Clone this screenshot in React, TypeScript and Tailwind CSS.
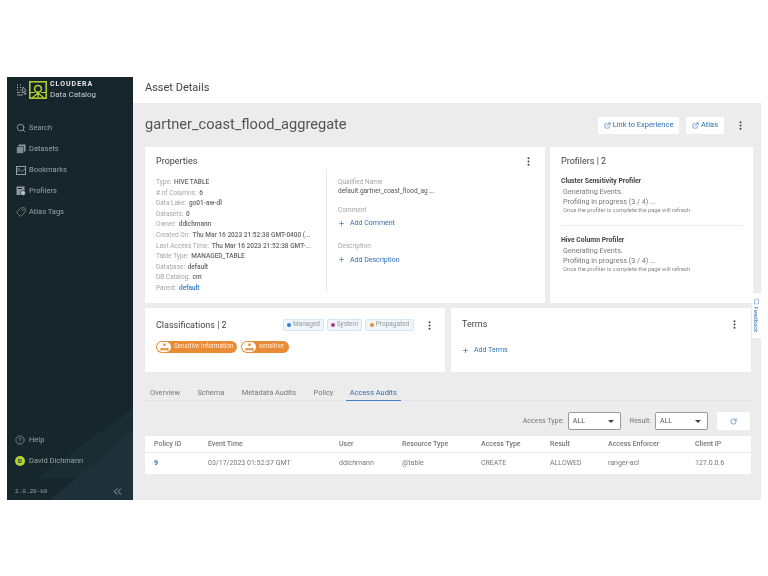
import { Search, Tag, CircleHelp, ChevronsLeft, Plus, ExternalLink, RotateCw, MessageSquare } from "lucide-react";

const font = "font-['Roboto',sans-serif]";

function Dots({ className = "" }: { className?: string }) {
  return (
    <svg width="3" height="9" viewBox="0 0 3 9" fill="#444" className={`shrink-0 ${className}`}>
      <circle cx="1.5" cy="1.2" r="1" />
      <circle cx="1.5" cy="4.5" r="1" />
      <circle cx="1.5" cy="7.8" r="1" />
    </svg>
  );
}

function DatasetsIcon() {
  return (
    <svg width="10" height="10" viewBox="0 0 10 10" fill="none">
      <rect x="2.5" y="0.5" width="7" height="7" fill="#8f9a9d" />
      <rect x="0.5" y="2.5" width="7" height="7" fill="#7f8b8e" stroke="#17262c" strokeWidth="0.6" />
    </svg>
  );
}

function BookmarksIcon() {
  return (
    <svg width="10" height="9" viewBox="0 0 10 9" fill="none" stroke="#98a3a6" strokeWidth="1">
      <rect x="0.5" y="0.5" width="9" height="8" />
      <path d="M1 6l2.5-2 2 1.5L9 3M1 3h3" strokeWidth="0.8" />
    </svg>
  );
}

function ProfilersIcon() {
  return (
    <svg width="10" height="10" viewBox="0 0 10 10">
      <rect x="0.5" y="0.5" width="8" height="8.5" fill="#8f9a9d" />
      <rect x="2" y="2" width="4" height="1" fill="#17262c" />
      <circle cx="7" cy="7" r="2.5" fill="#c2c9cb" stroke="#17262c" strokeWidth="0.7" />
    </svg>
  );
}

function SwitcherIcon() {
  return (
    <svg width="11" height="12" viewBox="0 0 11 12" fill="none" stroke="#aeb6b8" strokeWidth="1">
      <path d="M1 1h1M4 1h1M1 3.5h1M4 3.5h1M1 6h1M4 6h1" />
      <path d="M7 3l3 3.5-1.5.5L10 10l-1 .5L7.5 8 6 9z" strokeWidth="0.8" />
      <path d="M1 8.5h3M1 11h6" strokeWidth="0.8" />
    </svg>
  );
}

function Logo() {
  return (
    <svg width="18" height="18" viewBox="0 0 18 18" fill="none" stroke="#b5d334" strokeWidth="1.5">
      <rect x="0.8" y="0.8" width="16.4" height="16.4" />
      <circle cx="9" cy="7.8" r="3.4" />
      <path d="M9 11v6M1 11.5l5 0M17 11.5l-5 0M3 17l6-5 6 5" strokeWidth="1.2" />
    </svg>
  );
}

function NodeIcon() {
  return (
    <svg width="9" height="8" viewBox="0 0 9 8" fill="#e98a34">
      <rect x="3.3" y="0.5" width="2.4" height="2.4" />
      <rect x="0.5" y="5" width="2.4" height="2.4" />
      <rect x="3.3" y="5" width="2.4" height="2.4" />
      <rect x="6.1" y="5" width="2.4" height="2.4" />
    </svg>
  );
}

function Sidebar() {
  const items = [
    { label: "Search", icon: <Search size={10} strokeWidth={2} className="text-[#98a3a6]" /> },
    { label: "Datasets", icon: <DatasetsIcon /> },
    { label: "Bookmarks", icon: <BookmarksIcon /> },
    { label: "Profilers", icon: <ProfilersIcon /> },
    { label: "Atlas Tags", icon: <Tag size={10} strokeWidth={1.6} className="-scale-x-100 text-[#98a3a6]" /> },
  ];
  return (
    <aside className="relative flex w-[126px] shrink-0 flex-col overflow-hidden bg-[#17262c] text-[#98a3a6]">
      <svg className="absolute bottom-0 left-0" width="126" height="100" viewBox="0 0 126 100">
        <path d="M126 8L30 78H70L126 38Z" fill="#1b2c33" />
        <path d="M126 30L43 100H126Z" fill="#1e3038" />
      </svg>
      <div className="relative flex flex-1 flex-col">
        <div className="flex items-center pl-[9px] pt-[3px]">
          <SwitcherIcon />
          <div className="ml-[2px]"><Logo /></div>
          <div className="ml-[3px] flex flex-col leading-[9.5px]">
            <span className="text-[7px] font-bold tracking-[1px] text-[#e4e8e9]">CLOUDERA</span>
            <span className="text-[8px] text-[#c4cacc]">Data Catalog</span>
          </div>
        </div>
        <nav className="mt-[24px] flex flex-col gap-[11px] pl-[9px]">
          {items.map((item) => (
            <div key={item.label} className="flex h-[10px] items-center text-[7.5px]">
              <span className="flex w-[13px] items-center">{item.icon}</span>
              <span>{item.label}</span>
            </div>
          ))}
        </nav>
        <div className="mt-auto flex flex-col pl-[8px]">
          <div className="flex h-[12px] items-center text-[7.5px]">
            <CircleHelp size={10} strokeWidth={1.6} className="mr-[4px]" />
            Help
          </div>
          <div className="mt-[9px] flex h-[11px] items-center text-[7.5px]">
            <span className="mr-[4px] flex h-[10px] w-[10px] items-center justify-center rounded-full bg-[#b5d334] text-[6px] font-bold text-[#17262c]">D</span>
            David Dichmann
          </div>
          <div className="mb-[2px] mt-[19px] flex items-center justify-between pr-[9px]">
            <span className="font-['Liberation_Mono',monospace] text-[6px]">2.0.20-b9</span>
            <ChevronsLeft size={13} strokeWidth={1.4} className="text-[#c4cacc]" />
          </div>
        </div>
      </div>
    </aside>
  );
}

function PropRow({ name, value, link }: { name: string; value: string; link?: boolean }) {
  return (
    <div className="h-[10.6px] whitespace-nowrap text-[6.5px] leading-[10.6px]">
      <span className="text-[#a5a5a5]">{name}: </span>
      <span className={`ml-[1px] font-medium ${link ? "text-[#2f78c4]" : "text-[#666]"}`}>{value}</span>
    </div>
  );
}

function Profiler({ name }: { name: string }) {
  return (
    <div>
      <div className="text-[6.8px] font-bold leading-[9px] text-[#444]">{name}</div>
      <div className="mt-[1px] pl-[2px] text-[7.2px] leading-[10px] text-[#777]">
        <div>Generating Events.</div>
        <div>Profiling in progress (3 / 4) ...</div>
      </div>
      <div className="whitespace-nowrap pl-[2px] text-[5.8px] leading-[7px] text-[#888]">Once the profiler is complete the page will refresh</div>
    </div>
  );
}

function AddLink({ label }: { label: string }) {
  return (
    <div className="flex items-center text-[7px] text-[#2f6fb5]">
      <Plus size={7} strokeWidth={2.2} className="mr-[5px]" />
      {label}
    </div>
  );
}

function Legend({ color, label, width }: { color: string; label: string; width: string }) {
  return (
    <span className={`flex h-[12px] items-center justify-center rounded-[2px] border border-[#d3e6f5] bg-[#eef6fc] text-[6.5px] text-[#999] ${width}`}>
      <span className={`mr-[2px] h-[4px] w-[4px] rounded-full ${color}`} />
      {label}
    </span>
  );
}

function Chip({ label, width }: { label: string; width: string }) {
  return (
    <span className={`flex h-[12px] items-center rounded-full bg-[#e98a34] pl-[1px] text-[6.3px] text-[#fdf0e3] ${width}`}>
      <span className="mr-[3px] flex h-[10px] w-[14px] items-center justify-center rounded-full bg-white"><NodeIcon /></span>
      {label}
    </span>
  );
}

function SelectBox() {
  return (
    <div className="flex h-[18px] w-[53px] items-center justify-between rounded-[2px] border border-[#9a9a9a] bg-white pl-[4px] pr-[6px] text-[7px] text-[#555]">
      ALL
      <span className="h-0 w-0 border-x-[3px] border-t-[3px] border-x-transparent border-t-[#444]" />
    </div>
  );
}

const columns = [
  { name: "Policy ID", value: "9", width: "w-[54px]" },
  { name: "Event Time", value: "03/17/2023 01:52:37 GMT", width: "w-[131px]" },
  { name: "User", value: "ddichmann", width: "w-[63px]" },
  { name: "Resource Type", value: "@table", width: "w-[79px]" },
  { name: "Access Type", value: "CREATE", width: "w-[69px]" },
  { name: "Result", value: "ALLOWED", width: "w-[58px]" },
  { name: "Access Enforcer", value: "ranger-acl", width: "w-[87px]" },
  { name: "Client IP", value: "127.0.0.6", width: "w-[56px]" },
];

export default function App() {
  return (
    <div className={`h-[576px] w-[768px] overflow-hidden bg-white pl-[7px] pt-[77px] blur-[0.5px] ${font}`}>
      <div className="flex h-[423px] w-[754px]">
        <Sidebar />
        <main className="flex flex-1 flex-col">
          <h1 className="flex h-[26px] items-start pl-[12px] pt-[4px] text-[11px] leading-[13px] text-[#444]">Asset Details</h1>
          <div className="relative flex-1 bg-[#ececec] pl-[12px]">
            <div className="flex h-[44px] items-center">
              <h2 className="text-[14.6px] text-[#555]">gartner_coast_flood_aggregate</h2>
              <div className="ml-auto flex items-center gap-[7px] pr-[19px] text-[7.5px] text-[#2f6fb5]">
                <span className="flex h-[17px] w-[81px] items-center justify-center gap-[2px] bg-white">
                  <ExternalLink size={7} /> Link to Experience
                </span>
                <span className="flex h-[17px] w-[38px] items-center justify-center gap-[2px] bg-white">
                  <ExternalLink size={7} /> Atlas
                </span>
                <Dots className="ml-[8px]" />
              </div>
            </div>

            <div className="flex h-[156px] gap-[5px]">
              <section className="flex w-[400px] bg-white pl-[11px] pt-[9px]">
                <div className="w-[170px]">
                  <h3 className="text-[9px] leading-[11px] text-[#444]">Properties</h3>
                  <div className="mt-[10px]">
                    <PropRow name="Type" value="HIVE TABLE" />
                    <PropRow name="# of Columns" value="6" />
                    <PropRow name="Data Lake" value="go01-aw-dl" />
                    <PropRow name="Datasets" value="0" />
                    <PropRow name="Owner" value="ddichmann" />
                    <PropRow name="Created On" value="Thu Mar 16 2023 21:52:38 GMT-0400 (..." />
                    <PropRow name="Last Access Time" value="Thu Mar 16 2023 21:52:38 GMT-..." />
                    <PropRow name="Table Type" value="MANAGED_TABLE" />
                    <PropRow name="Database" value="default" />
                    <PropRow name="DB Catalog" value="cm" />
                    <PropRow name="Parent" value="default" link />
                  </div>
                </div>
                <div className="mb-[11px] mt-[13px] flex flex-1 flex-col border-l border-[#e8e8e8] pl-[11px] pt-[9px]">
                  <div className="text-[6.5px] leading-[9px] text-[#a5a5a5]">Qualified Name</div>
                  <div className="text-[6.5px] leading-[9px] text-[#555]">default.gartner_coast_flood_ag ...</div>
                  <div className="mt-[10px] text-[6.5px] leading-[9px] text-[#a5a5a5]">Comment</div>
                  <div className="mt-[3px]"><AddLink label="Add Comment" /></div>
                  <div className="mt-[13px] text-[6.5px] leading-[9px] text-[#a5a5a5]">Description</div>
                  <div className="mt-[4px]"><AddLink label="Add Description" /></div>
                </div>
                <Dots className="mr-[15px] mt-[1px]" />
              </section>

              <section className="w-[203px] bg-white pl-[11px] pt-[9px]">
                <h3 className="text-[9px] leading-[11px] text-[#444]">Profilers | 2</h3>
                <div className="mr-[10px] mt-[10px]">
                  <Profiler name="Cluster Sensitivity Profiler" />
                  <div className="mb-[10px] mt-[11px] border-t border-[#eee]" />
                  <Profiler name="Hive Column Profiler" />
                </div>
              </section>
            </div>

            <div className="mt-[5px] flex h-[64px] gap-[6px]">
              <section className="w-[300px] bg-white px-[11px] pt-[11px]">
                <div className="flex items-center">
                  <h3 className="text-[9px] leading-[11px] text-[#444]">Classifications | 2</h3>
                  <div className="ml-auto flex items-center gap-[3px]">
                    <Legend color="bg-[#2f7fe0]" label="Managed" width="w-[41px]" />
                    <Legend color="bg-[#b8338c]" label="System" width="w-[35px]" />
                    <Legend color="bg-[#e98a34]" label="Propagated" width="w-[49px]" />
                  </div>
                  <Dots className="ml-[14px] mr-[3px]" />
                </div>
                <div className="mt-[10px] flex gap-[4px]">
                  <Chip label="Sensitive Information" width="w-[81px]" />
                  <Chip label="sensitive" width="w-[48px]" />
                </div>
              </section>
              <section className="flex w-[300px] flex-col bg-white px-[11px] pt-[11px]">
                <div className="flex items-center justify-between">
                  <h3 className="text-[9px] leading-[11px] text-[#444]">Terms</h3>
                  <Dots className="mr-[4px]" />
                </div>
                <div className="mt-[15px]"><AddLink label="Add Terms" /></div>
              </section>
            </div>

            <div className="mr-[10px] mt-[11px] flex h-[18px] gap-[17.5px] border-b border-[#e2e2e2] pl-[5px] pt-[4px] text-[7.4px] text-[#777]">
              <span>Overview</span>
              <span>Schema</span>
              <span>Metadata Audits</span>
              <span>Policy</span>
              <span className="-ml-[5px] h-[14px] border-b border-[#3f7fc8] px-[4px] text-[#2f6fb5]">Access Audits</span>
            </div>

            <div className="mr-[11px] mt-[11px] flex h-[18px] items-center justify-end text-[7px] text-[#777]">
              <span className="mr-[4px]">Access Type:</span>
              <SelectBox />
              <span className="ml-[9px] mr-[4px]">Result:</span>
              <SelectBox />
              <span className="ml-[9px] flex h-[18px] w-[33px] items-center justify-center bg-white">
                <RotateCw size={7} className="text-[#2f6fb5]" />
              </span>
            </div>

            <div className="mr-[10px] mt-[6px] text-[7px] text-[#777]">
              <div className="flex h-[16px] items-center bg-white pl-[9px] font-medium">
                {columns.map((c) => (
                  <span key={c.name} className={`shrink-0 whitespace-nowrap ${c.width}`}>{c.name}</span>
                ))}
              </div>
              <div className="mt-[1px] flex h-[21px] items-center bg-white pl-[9px]">
                {columns.map((c, i) => (
                  <span key={c.name} className={`shrink-0 whitespace-nowrap ${c.width} ${i === 0 ? "font-bold text-[#2f6fb5]" : ""}`}>{c.value}</span>
                ))}
              </div>
            </div>

            <div className="absolute left-[619px] top-[190px] flex h-[45px] w-[10px] items-center justify-center bg-white">
              <span className="flex rotate-90 items-center gap-[2px] whitespace-nowrap text-[6px] text-[#2f6fb5]">
                <MessageSquare size={6} className="-scale-x-100" /> Feedback
              </span>
            </div>
          </div>
        </main>
      </div>
    </div>
  );
}
